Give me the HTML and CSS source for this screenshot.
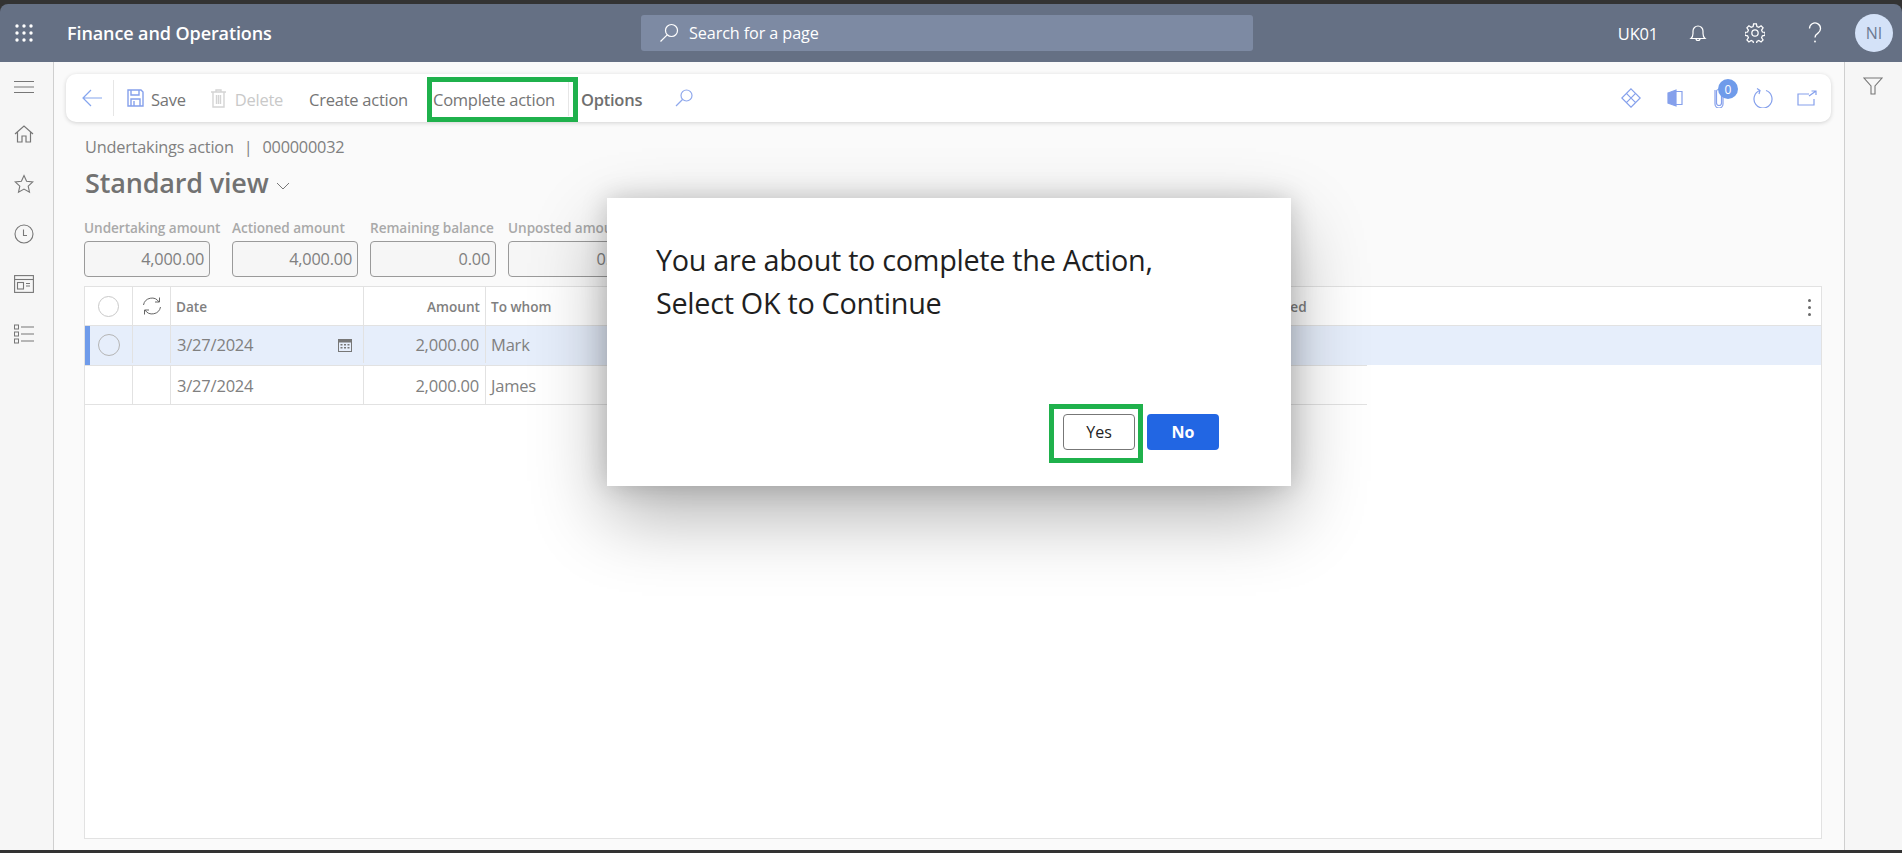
FILE: index.html
```html
<!DOCTYPE html>
<html lang="en">
<head>
<meta charset="utf-8">
<title>Finance and Operations</title>
<link rel="stylesheet" href="styles.css">
</head>
<body>
<div class="app">
  <header class="topbar">
    <svg class="waffle" width="20" height="20" viewBox="0 0 20 20" fill="#fff"><circle cx="3" cy="3" r="1.7"/><circle cx="10" cy="3" r="1.7"/><circle cx="17" cy="3" r="1.7"/><circle cx="3" cy="10" r="1.7"/><circle cx="10" cy="10" r="1.7"/><circle cx="17" cy="10" r="1.7"/><circle cx="3" cy="17" r="1.7"/><circle cx="10" cy="17" r="1.7"/><circle cx="17" cy="17" r="1.7"/></svg>
    <div class="brand">Finance and Operations</div>
    <div class="search">
      <svg width="20" height="20" viewBox="0 0 20 20" fill="none" stroke="#fff" stroke-width="1.2"><circle cx="12.5" cy="7.5" r="6"/><path d="M8.2 11.8 1.5 18.5"/></svg>
      <span>Search for a page</span>
    </div>
    <div class="top-right">
      <span class="company">UK01</span>
      <svg class="ti bell" width="20" height="20" viewBox="0 0 20 20" fill="none" stroke="#fff" stroke-width="1.2"><path d="M3 15.5c1.5-1.3 2-2.5 2-5V8a5 5 0 0 1 10 0v2.500c0 2.500.5 3.700 2 5z"/><path d="M8 15.500a2 2 0 0 0 4 0"/></svg>
      <svg class="ti gear" width="20" height="20" viewBox="0 0 24 24" fill="none" stroke="#fff" stroke-width="1.5"><circle cx="12" cy="12" r="3.800"/><path d="M10.300 1h3.400l.6 3.200 2.300 1 2.700-1.800 2.400 2.400-1.800 2.700 1 2.300 3.100.6v3.400l-3.100.6-1 2.300 1.800 2.700-2.400 2.400-2.700-1.800-2.300 1-.6 3.200h-3.400l-.6-3.200-2.300-1-2.700 1.800-2.400-2.400 1.800-2.700-1-2.300-3.100-.6v-3.400l3.100-.6 1-2.300-1.800-2.700 2.400-2.400 2.700 1.800 2.300-1z"/></svg>
      <svg class="ti help" width="20" height="22" viewBox="0 0 20 22" fill="none" stroke="#fff" stroke-width="1.3"><path d="M4.500 6.500a5.500 5.500 0 1 1 8.500 4.600c-1.800 1.200-3 2.200-3 4.400"/><circle cx="10" cy="19.500" r=".9" fill="#fff" stroke="none"/></svg>
      <div class="avatar">NI</div>
    </div>
  </header>

  <div class="body">
    <nav class="rail">
      <svg width="20" height="14" viewBox="0 0 20 14" fill="none" stroke="#777" stroke-width="1"><path d="M0 1.500h20M0 7h20M0 12.500h20"/></svg>
      <svg width="20" height="18" viewBox="0 0 20 18" fill="none" stroke="#777" stroke-width="1.200"><path d="M1 9 10 1l9 8M3.500 7v10h4.500v-6h4v6h4.500V7"/></svg>
      <svg width="20" height="20" viewBox="0 0 20 20" fill="none" stroke="#777" stroke-width="1.100"><path d="m10 1.500 2.600 5.700 6.200.7-4.600 4.200 1.300 6.100L10 15.100 4.500 18.200l1.300-6.100-4.600-4.200 6.200-.7z"/></svg>
      <svg width="20" height="20" viewBox="0 0 20 20" fill="none" stroke="#777" stroke-width="1.100"><circle cx="10" cy="10" r="9"/><path d="M9.500 5.500v6h3.500"/></svg>
      <svg width="20" height="18" viewBox="0 0 20 18" fill="none" stroke="#777" stroke-width="1.100"><rect x=".6" y=".6" width="18.800" height="16.800"/><path d="M.6 4.500h18.800"/><rect x="3.500" y="7.500" width="6" height="6.500"/><path d="M12 8.500h4M12 11h4"/></svg>
      <svg width="20" height="20" viewBox="0 0 20 20" fill="none" stroke="#777" stroke-width="1"><rect x=".5" y="1" width="4" height="4"/><rect x=".5" y="8" width="4" height="4"/><rect x=".5" y="15" width="4" height="4"/><path d="M7 3h13M7 10h13M7 17h13"/></svg>
    </nav>

    <main class="content">
      <div class="toolbar">
        <svg class="back" width="20" height="18" viewBox="0 0 20 18" fill="none" stroke="#85a5ee" stroke-width="1.200"><path d="M20 9H1M9 1 1 9l8 8"/></svg>
        <span class="sep"></span>
        <button class="cmd first">
          <svg width="17" height="18" viewBox="0 0 17 18" fill="none" stroke="#85a0ec" stroke-width="1.400"><path d="M1 1h13l2 2v14H1z"/><path d="M4 1v5h8V1M4 17v-7h9v7M7 12v5"/></svg>
          Save
        </button>
        <button class="cmd off">
          <svg width="15" height="19" viewBox="0 0 15 19" fill="none" stroke="#d4d4d4" stroke-width="1.400"><path d="M0 3h15M5 3V1h5v2M2 3v15h11V3M5.500 6v9M7.500 6v9M9.500 6v9"/></svg>
          Delete
        </button>
        <button class="cmd create">Create action</button>
        <button class="cmd complete">Complete action</button>
        <span class="sep sep2"></span>
        <button class="cmd options">Options</button>
        <svg class="tsearch" width="18" height="18" viewBox="0 0 18 18" fill="none" stroke="#8fa8ec" stroke-width="1.200"><circle cx="11.500" cy="6.500" r="5.500"/><path d="M7.500 10.500 1 17"/></svg>
        <div class="tool-right">
          <svg width="20" height="20" viewBox="0 0 20 20" fill="none" stroke="#85a0ec" stroke-width="1.200"><path d="M10 .8 19.200 10 10 19.200.8 10zM5.400 5.400 14.600 14.600M14.600 5.400l-9.200 9.200"/></svg>
          <svg width="16" height="18" viewBox="0 0 16 18" fill="none" stroke="#85a0ec" stroke-width="1.200"><path d="M1 4 9 1v16l-8-3z" fill="#85a0ec"/><path d="M9 2.500h6v13H9"/></svg>
          <span class="clip">
            <svg width="10" height="20" viewBox="0 0 10 20" fill="none" stroke="#85a0ec" stroke-width="1.200"><path d="M7.500 5v10a2.500 2.500 0 0 1-5 0V3.500a2 2 0 0 1 4 0"/><path d="M1 2v14a4 4 0 0 0 8 0V6"/></svg>
            <span class="badge">0</span>
          </span>
          <svg width="20" height="20" viewBox="0 0 20 20" fill="none" stroke="#85a0ec" stroke-width="1.200"><path d="M7 2.500A9 9 0 1 0 13 2.500M4 .5 7 2.500 6 6"/></svg>
          <svg width="20" height="16" viewBox="0 0 20 16" fill="none" stroke="#85a0ec" stroke-width="1.200"><path d="M12 4H1v11h16V9M12 6l7-5M14.500 1H19v4"/></svg>
        </div>
        <span class="highlight hl-complete"></span>
      </div>

      <div class="crumb"><span>Undertakings action</span><span class="bar">|</span><span>000000032</span></div>
      <h1 class="view">Standard view
        <svg width="14" height="8" viewBox="0 0 14 8" fill="none" stroke="#777" stroke-width="1"><path d="m1 1 6 6 6-6"/></svg>
      </h1>

      <div class="fields">
        <div class="field f1"><label>Undertaking amount</label><div class="input">4,000.00</div></div>
        <div class="field f2"><label>Actioned amount</label><div class="input">4,000.00</div></div>
        <div class="field f2"><label>Remaining balance</label><div class="input">0.00</div></div>
        <div class="field f2"><label>Unposted amount</label><div class="input">0.00</div></div>
      </div>

      <section class="grid">
        <div class="row head">
          <div class="cell c-sel"><span class="radio"></span></div>
          <div class="cell c-ref">
            <svg width="20" height="20" viewBox="0 0 20 20" fill="none" stroke="#666" stroke-width="1"><path d="M1.500 9A8.500 8.500 0 0 1 17 6M18.500 11A8.500 8.500 0 0 1 3 14M17.500 1.500V6H13M2.500 18.500V14H7"/></svg>
          </div>
          <div class="cell c-date">Date</div>
          <div class="cell c-amt">Amount</div>
          <div class="cell c-who">To whom</div>
          <div class="cell c-end">Completed</div>
          <div class="more"><i></i><i></i><i></i></div>
        </div>
        <div class="row sel">
          <div class="cell c-sel"><span class="radio big"></span></div>
          <div class="cell c-ref"></div>
          <div class="cell c-date">3/27/2024
            <svg class="cal" width="14" height="14" viewBox="0 0 14 14" fill="#777"><path d="M0 1h14v13H0zm1 3.500V13h12V4.500z"/><path d="M2.500 6h2v1.500h-2zm3.500 0h2v1.500H6zm3.500 0h2v1.500h-2zM2.500 9h2v1.500h-2zM6 9h2v1.500H6zm3.500 0h2v1.500h-2z"/></svg>
          </div>
          <div class="cell c-amt">2,000.00</div>
          <div class="cell c-who">Mark</div>
        </div>
        <div class="row plain">
          <div class="cell c-sel"></div>
          <div class="cell c-ref"></div>
          <div class="cell c-date">3/27/2024</div>
          <div class="cell c-amt">2,000.00</div>
          <div class="cell c-who">James</div>
        </div>
      </section>
    </main>

    <aside class="filter">
      <svg width="20" height="18" viewBox="0 0 20 18" fill="none" stroke="#777" stroke-width="1.100"><path d="M1 1h18l-7 8v8H8V9z"/></svg>
    </aside>
  </div>

  <div class="dialog" role="dialog">
    <p class="msg">You are about to complete the Action,<br>Select OK to Continue</p>
    <div class="actions">
      <button class="btn yes">Yes</button>
      <button class="btn no">No</button>
    </div>
    <span class="highlight hl-yes"></span>
  </div>
</div>
</body>
</html>
```

FILE: styles.css
```css
* { box-sizing: border-box; }
html, body { margin: 0; height: 100%; }
body { font-family: "Open Sans", "Noto Sans", "Liberation Sans", sans-serif; background: #333; overflow: hidden; }
button { font: inherit; background: none; border: 0; padding: 0; }

.app { position: relative; width: 1902px; height: 853px; padding: 4px 0 3px; background: #333; display: flex; flex-direction: column; }

.topbar { height: 58px; flex: none; background: #657084; border-radius: 8px 8px 0 0; display: flex; align-items: center; color: #fff; }
.waffle { margin-left: 14px; }
.brand { margin-left: 33px; width: 574px; font-size: 18px; font-weight: 600; letter-spacing: -.1px; }
.search { width: 612px; height: 36px; background: #7d8aa3; border-radius: 3px; display: flex; align-items: center; padding-left: 18px; gap: 10px; font-size: 16.200px; letter-spacing: -.1px; }
.top-right { margin-left: auto; display: flex; align-items: center; }
.company { font-size: 16.500px; margin-right: 30px; letter-spacing: -.2px; }
.ti { flex: none; }
.bell { margin-right: 37px; }
.gear { margin-right: 40px; }
.help { margin-right: 30px; }
.avatar { width: 38px; height: 38px; border-radius: 50%; background: #d4e2f8; color: #6c7a92; font-size: 16px; display: flex; align-items: center; justify-content: center; margin-right: 9px; }

.body { flex: 1; min-height: 0; display: flex; background: #fafafa; }
.rail { width: 54px; flex: none; background: #f6f6f6; border-right: 1px solid #cfcfcf; display: flex; flex-direction: column; align-items: center; gap: 30.750px; padding-top: 18px; padding-right: 6px; }
.content { flex: 1; min-width: 0; padding: 12px 13px 0 12px; display: flex; flex-direction: column; }
.filter { width: 58px; flex: none; background: #f6f6f6; border-left: 1px solid #cfcfcf; display: flex; justify-content: center; padding-top: 15px; padding-right: 1px; }

.toolbar { position: relative; height: 48px; flex: none; background: #fff; border-radius: 10px; box-shadow: 0 1px 4px rgba(0,0,0,.16); display: flex; align-items: center; padding-left: 16px; }
.sep { width: 1px; height: 36px; background: #e6e6e6; margin: 0 13px 0 11px; }
.sep2 { margin: 0 12px 0 0; }
.cmd { display: flex; align-items: center; gap: 7px; font-size: 16.500px; letter-spacing: -.25px; color: #757575; white-space: nowrap; padding-top: 2px; }
.cmd svg { margin-top: -2px; }
.cmd.off { color: #c9c9c9; margin-left: 25px; gap: 9px; }
.cmd.create { margin-left: 26px; }
.cmd.complete { margin-left: 25px; width: 135px; }
.cmd.options { font-weight: 600; color: #6f6f6f; }
.tsearch { margin-left: 33px; }
.tool-right { margin-left: auto; display: grid; grid-template-columns: repeat(5, 44px); justify-items: center; align-items: center; padding-right: 2px; }
.clip { position: relative; display: flex; }
.badge { position: absolute; left: 4px; top: -9px; width: 20px; height: 20px; border-radius: 50%; background: #6f9bea; color: #fff; font-size: 12px; display: flex; align-items: center; justify-content: center; }

.highlight { position: absolute; border: 5px solid #1fb14c; pointer-events: none; }
.hl-complete { left: 361px; top: 3px; width: 151px; height: 45px; }
.hl-yes { left: 442px; top: 206px; width: 94px; height: 59px; }

.crumb { margin: 14px 0 0 19px; height: 22px; font-size: 16.300px; letter-spacing: -.2px; line-height: 22px; color: #808080; display: flex; }
.bar { margin: 0 10px; }
.view { margin: 5px 0 0 19px; height: 40px; font-size: 27px; line-height: 40px; font-weight: 600; color: #727272; letter-spacing: -.17px; display: flex; align-items: center; gap: 7px; }
.view svg { margin-top: 6px; }

.fields { margin: 13px 0 0 18px; display: flex; }
.field { flex: none; }
.f1 { width: 148px; }
.f2 { width: 138px; }
.field label { display: block; height: 25px; font-size: 13.600px; line-height: 24px; font-weight: 600; color: #a9a9a9; white-space: nowrap; letter-spacing: -.05px; }
.input { width: 126px; height: 36px; border: 1px solid #9a9a9a; border-radius: 4px; background: #f6f6f6; text-align: right; padding-right: 5px; font-size: 16.300px; line-height: 34px; color: #808080; letter-spacing: -.2px; }

.grid { margin: 9px 0 11px 18px; flex: 1; width: 1738px; background: #fff; border: 1px solid #e2e2e2; font-size: 16.500px; color: #808080; letter-spacing: -.2px; }
.row { display: flex; height: 39px; }
.row.head { height: 39px; border-bottom: 1px solid #e2e2e2; font-size: 13.600px; font-weight: 600; color: #808080; letter-spacing: 0; position: relative; }
.row.sel { background: #e6eefb; box-shadow: inset 5px 0 0 #6f9bea; padding-bottom: 2px; }
.row.sel .cell { border-right-color: #e2e2e2; }
.row.plain { width: 1282px; border-top: 1px solid #e2e2e2; border-bottom: 1px solid #e2e2e2; height: 40px; }
.cell { border-right: 1px solid #e2e2e2; display: flex; align-items: center; padding: 0 5px; flex: none; white-space: nowrap; }
.c-sel { width: 48px; justify-content: center; }
.c-ref { width: 38px; justify-content: center; }
.c-date { width: 193px; justify-content: space-between; padding-right: 11px; padding-left: 6px; }
.c-amt { width: 122px; justify-content: flex-end; padding-right: 6px; }
.c-who { width: 500px; border-right: 0; }
.c-end { border-right: 0; margin-left: 244px; }
.head .c-date { padding-left: 5px; }
.head .c-amt { padding-right: 5px; }
.radio { width: 21px; height: 21px; border: 1px solid #c9c9c9; border-radius: 50%; background: #fff; }
.radio.big { width: 22px; height: 22px; border: 1.500px solid #b5b5b5; background: transparent; }
.more { position: absolute; right: 10px; top: 12px; display: flex; flex-direction: column; gap: 4px; }
.more i { width: 3px; height: 3px; border-radius: 50%; background: #6a6a6a; }

.dialog { position: absolute; left: 607px; top: 198px; width: 684px; height: 288px; background: #fff; box-shadow: 0 30px 70px rgba(0,0,0,.3), 0 0 25px rgba(0,0,0,.18); padding: 40px 50px 0 49px; display: flex; flex-direction: column; }
.msg { margin: 0; font-size: 28.800px; line-height: 43px; color: #1f1f1f; letter-spacing: -.3px; flex: 1; }
.actions { display: flex; justify-content: flex-end; gap: 12px; padding: 0 22px 36px 0; margin-right: -50px; padding-right: 72px; }
.btn { width: 72px; height: 36px; border-radius: 4px; font-size: 16px; display: flex; align-items: center; justify-content: center; }
.yes { background: #fff; border: 1px solid #777; color: #222; }
.no { background: #2266e3; color: #fff; font-weight: 700; }
```
